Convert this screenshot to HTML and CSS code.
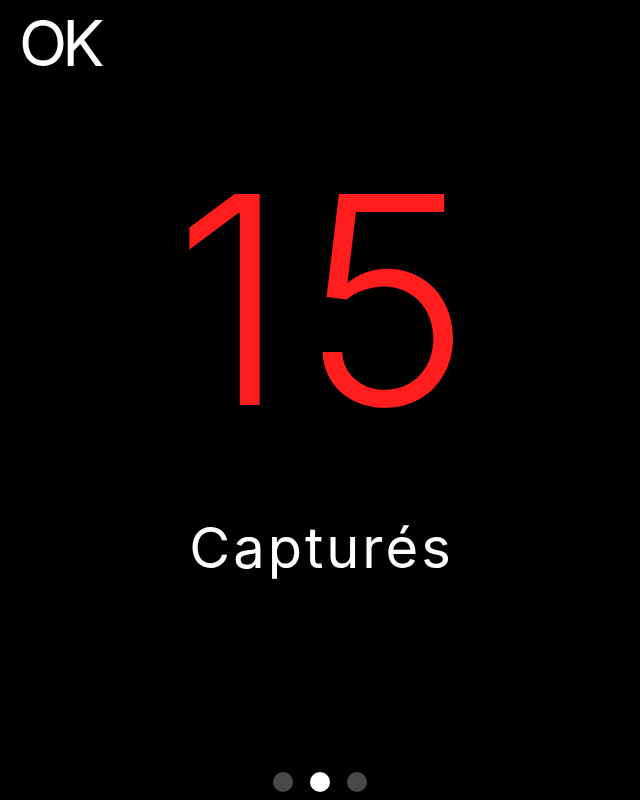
FILE: index.html
```html
<!DOCTYPE html>
<html lang="fr">
<head>
<meta charset="utf-8">
<title>Capturés</title>
<link rel="stylesheet" href="styles.css">
</head>
<body>
<div class="screen">
  <div class="topbar"><span class="ok">OK</span></div>
  <div class="count">15</div>
  <div class="label">Capturés</div>
  <div class="dots">
    <span class="dot"></span>
    <span class="dot active"></span>
    <span class="dot"></span>
  </div>
</div>
</body>
</html>
```
FILE: styles.css
```css
html, body {
  margin: 0;
  padding: 0;
  background: #000;
}
.screen {
  width: 640px;
  height: 800px;
  display: flex;
  flex-direction: column;
  align-items: center;
  font-family: Inter, "Noto Sans", sans-serif;
  font-weight: 400;
  color: #fff;
}
.topbar {
  align-self: stretch;
  padding: 12px 0 0 19px;
  height: 63px;
}
.ok {
  font-size: 63px;
  line-height: 1;
  display: block;
  letter-spacing: -5px;
}
.count {
  margin-top: 80px;
  margin-left: 17px;
  font-size: 290px;
  font-weight: 350;
  line-height: 1;
  color: #ff1d1d;
  letter-spacing: 12px;
}
.label {
  margin-top: 75px;
  margin-left: 3px;
  font-size: 56px;
  line-height: 1;
  letter-spacing: 3px;
}
.dots {
  margin-top: auto;
  margin-bottom: 8px;
  display: flex;
  gap: 17px;
}
.dot {
  width: 20px;
  height: 20px;
  border-radius: 50%;
  background: #4a4a4a;
}
.dot.active {
  background: #fff;
}
```
